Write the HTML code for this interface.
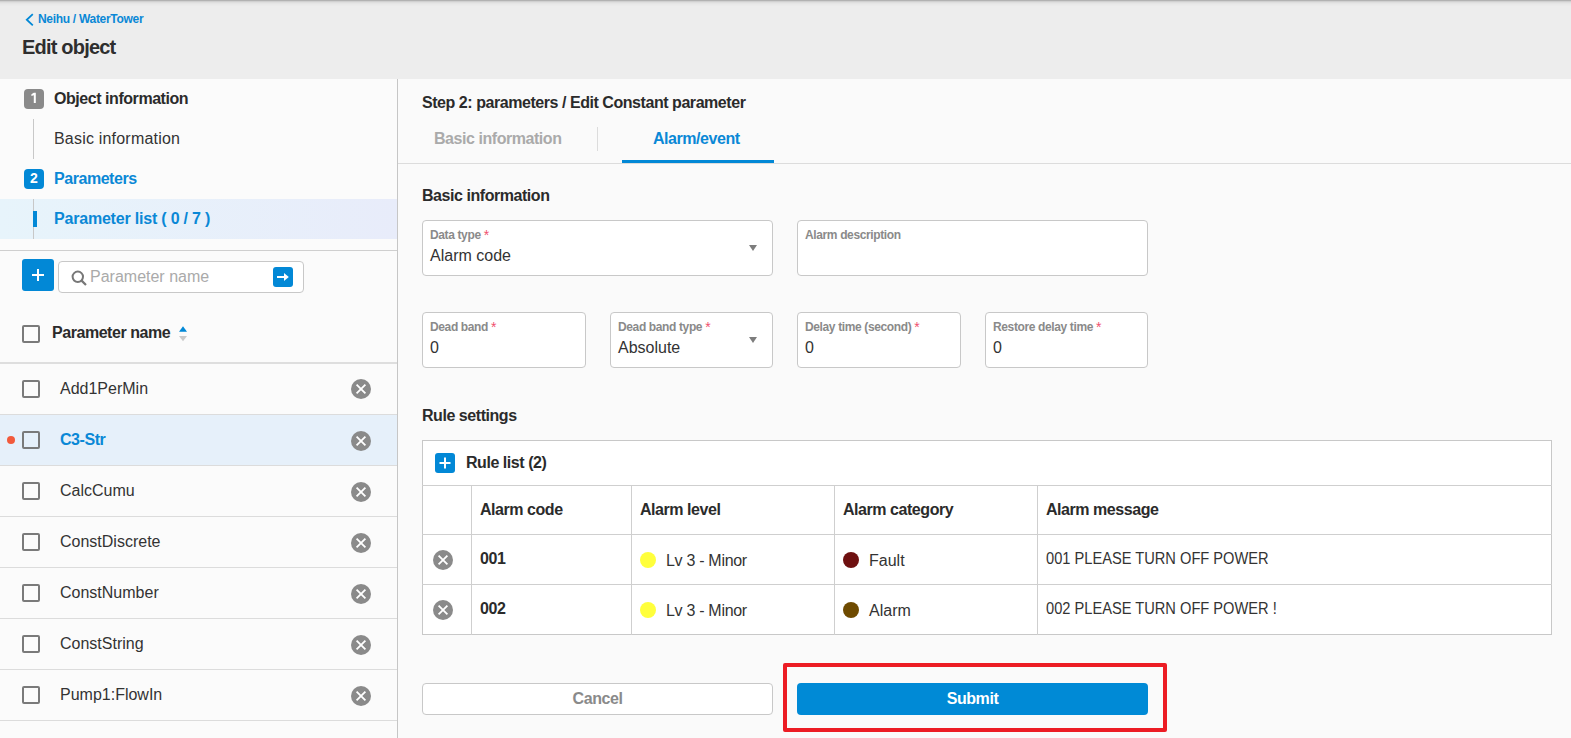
<!DOCTYPE html>
<html><head><meta charset="utf-8">
<style>
*{box-sizing:border-box;margin:0;padding:0}
html,body{width:1571px;height:738px;overflow:hidden;background:#fafafa;font-family:"Liberation Sans",sans-serif;color:#333}
.a{position:absolute}
.t{position:absolute;white-space:nowrap;font-size:16px;line-height:20px}
.b{font-weight:bold;letter-spacing:-0.45px}
#hdr{left:0;top:0;width:1571px;height:79px;background:#ededed}
#shadow{left:0;top:0;width:1571px;height:7px;background:linear-gradient(#b2b2b2 0px,#b2b2b2 0.5px,#d0d0d0 1.5px,#dedede 2.5px,#e5e5e5 3.5px,#e9e9e9 4.5px,#ededed 6.5px)}
#side{left:0;top:79px;width:398px;height:659px;background:#fbfbfb;border-right:1px solid #c6c6c6}
.badge{position:absolute;width:20px;height:20px;border-radius:4px;color:#fff;font-weight:bold;font-size:14px;line-height:20px;text-align:center}
.cb{position:absolute;width:18px;height:18px;border:2px solid #7a7a7a;border-radius:2px;background:transparent}
.xc{position:absolute;width:20px;height:20px;border-radius:50%;background:#8a8a8a}
.xc svg{position:absolute;left:0;top:0}
.hl{position:absolute;height:1px;background:#dcdcdc}
.vl{position:absolute;width:1px;background:#cfcfcf}
.fld{position:absolute;height:56px;border:1px solid #c8c8c8;border-radius:4px;background:#fff}
.lbl{position:absolute;left:7px;top:7.2px;font-size:12px;line-height:14px;font-weight:bold;color:#8a8a8a;letter-spacing:-0.37px;white-space:nowrap}
.lbl i{font-style:normal;font-weight:normal;font-size:14px;line-height:1px;color:#f0506e;margin-left:3px;position:relative;top:0.4px}
.val{position:absolute;left:7px;top:25.2px;font-size:16px;line-height:20px;color:#333;white-space:nowrap}
.dd{position:absolute;width:0;height:0;border-left:4px solid transparent;border-right:4px solid transparent;border-top:6px solid #7d7d7d}
.dot{position:absolute;width:16px;height:16px;border-radius:50%}
</style></head>
<body>
<div id="hdr" class="a"></div>
<div id="shadow" class="a"></div>
<svg class="a" style="left:20px;top:8px" width="20" height="24"><path d="M12.8 6.2L6.8 11.75L12.8 17.3" fill="none" stroke="#0288d6" stroke-width="1.8"/></svg>
<div class="t" style="left:38px;top:11.8px;font-size:12px;line-height:14px;font-weight:bold;color:#0a88d6;letter-spacing:-0.3px">Neihu / WaterTower</div>
<div class="t" style="left:22px;top:35px;font-size:20px;line-height:24px;font-weight:bold;color:#2e2e2e;letter-spacing:-0.8px">Edit object</div>

<div id="side" class="a"></div>
<div class="badge" style="left:24px;top:89px;background:#8a8a8a"><svg width="20" height="20" style="position:absolute;left:0;top:0"><polygon points="9.8,3.7 11.8,3.7 11.8,13.9 9.8,13.9 9.8,6.2 7.4,7.0 7.4,5.3" fill="#fff"/></svg></div>
<div class="t b" style="left:54px;top:88.5px;color:#2b2b2b">Object information</div>
<div class="vl" style="left:33px;top:119px;height:40px;background:#c8c8c8"></div>
<div class="t" style="left:54px;top:129px;color:#333;letter-spacing:0.2px">Basic information</div>
<div class="badge" style="left:24px;top:169px;background:#0288d6;line-height:18px">2</div>
<div class="t b" style="left:54px;top:168.5px;color:#0a88d6">Parameters</div>
<div class="a" style="left:0;top:199px;width:397px;height:40px;background:linear-gradient(90deg,#e7f4fb,#e8ecfa)"></div>
<div class="vl" style="left:33px;top:199px;height:40px;background:#c8c8c8"></div>
<div class="a" style="left:33px;top:211px;width:4px;height:16px;background:#0288d6"></div>
<div class="t b" style="left:54px;top:208.5px;color:#0a88d6;letter-spacing:-0.2px">Parameter list ( 0 / 7 )</div>
<div class="hl" style="left:0;top:250px;width:397px;background:#cfcfcf"></div>

<div class="a" style="left:22px;top:259px;width:32px;height:32px;border-radius:3px;background:#0288d6"></div>
<svg class="a" style="left:22px;top:259px" width="32" height="32"><path d="M16 10V22M10 16H22" stroke="#fff" stroke-width="2"/></svg>
<div class="a" style="left:58px;top:261px;width:246px;height:32px;border:1px solid #c8c8c8;border-radius:4px;background:#fff"></div>
<svg class="a" style="left:71px;top:269.5px" width="17" height="17"><circle cx="6.8" cy="6.8" r="5.2" fill="none" stroke="#777" stroke-width="2"/><path d="M10.6 10.6L15 15" stroke="#777" stroke-width="2.2"/></svg>
<div class="t" style="left:90px;top:266.8px;color:#aaa">Parameter name</div>
<div class="a" style="left:273px;top:267px;width:20px;height:20px;border-radius:3px;background:#0288d6"></div>
<svg class="a" style="left:273px;top:267px" width="20" height="20"><path d="M4 9H11.5V11H4Z" fill="#fff"/><path d="M11 6L15.8 10L11 14Z" fill="#fff"/></svg>

<div class="cb" style="left:22px;top:325px"></div>
<div class="t b" style="left:52px;top:322.5px;color:#2b2b2b">Parameter name</div>
<svg class="a" style="left:178px;top:325px" width="10" height="18"><path d="M1 6.8L5 1.2L9 6.8Z" fill="#0288d6"/><path d="M1 11L5 16.2L9 11Z" fill="#c9c9c9"/></svg>
<div class="a" style="left:0;top:362px;width:397px;height:2px;background:#dedede"></div>

<!-- rows -->
<div class="a" style="left:0;top:415px;width:397px;height:50px;background:#e6f0fa"></div>
<div class="hl" style="left:0;top:414px;width:397px"></div>
<div class="hl" style="left:0;top:465px;width:397px"></div>
<div class="hl" style="left:0;top:516px;width:397px"></div>
<div class="hl" style="left:0;top:567px;width:397px"></div>
<div class="hl" style="left:0;top:618px;width:397px"></div>
<div class="hl" style="left:0;top:669px;width:397px"></div>
<div class="hl" style="left:0;top:720px;width:397px"></div>

<div class="cb" style="left:22px;top:380px"></div>
<div class="t" style="left:60px;top:378.5px">Add1PerMin</div>
<div class="a" style="left:7px;top:436px;width:8px;height:8px;border-radius:50%;background:#f25a3c"></div>
<div class="cb" style="left:22px;top:431px"></div>
<div class="t b" style="left:60px;top:429.5px;color:#0a88d6">C3-Str</div>
<div class="cb" style="left:22px;top:482px"></div>
<div class="t" style="left:60px;top:480.5px">CalcCumu</div>
<div class="cb" style="left:22px;top:533px"></div>
<div class="t" style="left:60px;top:531.5px">ConstDiscrete</div>
<div class="cb" style="left:22px;top:584px"></div>
<div class="t" style="left:60px;top:582.5px">ConstNumber</div>
<div class="cb" style="left:22px;top:635px"></div>
<div class="t" style="left:60px;top:633.5px">ConstString</div>
<div class="cb" style="left:22px;top:686px"></div>
<div class="t" style="left:60px;top:684.5px">Pump1:FlowIn</div>

<div class="xc" style="left:351px;top:379px"><svg width="20" height="20"><path d="M5.6 5.6L14.4 14.4M14.4 5.6L5.6 14.4" stroke="#fff" stroke-width="1.8"/></svg></div>
<div class="xc" style="left:351px;top:431px"><svg width="20" height="20"><path d="M5.6 5.6L14.4 14.4M14.4 5.6L5.6 14.4" stroke="#fff" stroke-width="1.8"/></svg></div>
<div class="xc" style="left:351px;top:482px"><svg width="20" height="20"><path d="M5.6 5.6L14.4 14.4M14.4 5.6L5.6 14.4" stroke="#fff" stroke-width="1.8"/></svg></div>
<div class="xc" style="left:351px;top:533px"><svg width="20" height="20"><path d="M5.6 5.6L14.4 14.4M14.4 5.6L5.6 14.4" stroke="#fff" stroke-width="1.8"/></svg></div>
<div class="xc" style="left:351px;top:584px"><svg width="20" height="20"><path d="M5.6 5.6L14.4 14.4M14.4 5.6L5.6 14.4" stroke="#fff" stroke-width="1.8"/></svg></div>
<div class="xc" style="left:351px;top:635px"><svg width="20" height="20"><path d="M5.6 5.6L14.4 14.4M14.4 5.6L5.6 14.4" stroke="#fff" stroke-width="1.8"/></svg></div>
<div class="xc" style="left:351px;top:686px"><svg width="20" height="20"><path d="M5.6 5.6L14.4 14.4M14.4 5.6L5.6 14.4" stroke="#fff" stroke-width="1.8"/></svg></div>

<!-- main -->
<div class="t b" style="left:422px;top:93.3px;color:#2b2b2b">Step 2: parameters / Edit Constant parameter</div>
<div class="t b" style="left:434px;top:129px;color:#aaa">Basic information</div>
<div class="vl" style="left:597px;top:127px;height:24px;background:#dcdcdc"></div>
<div class="t b" style="left:653px;top:129px;color:#0a88d6">Alarm/event</div>
<div class="hl" style="left:398px;top:163px;width:1173px"></div>
<div class="a" style="left:622px;top:160px;width:152px;height:3px;background:#0288d6"></div>

<div class="t b" style="left:422px;top:186.3px;color:#2b2b2b">Basic information</div>

<div class="fld" style="left:422px;top:220px;width:351px"><div class="lbl">Data type<i>*</i></div><div class="val">Alarm code</div><div class="dd" style="left:326px;top:24px"></div></div>
<div class="fld" style="left:797px;top:220px;width:351px"><div class="lbl">Alarm description</div></div>

<div class="fld" style="left:422px;top:312px;width:164px"><div class="lbl">Dead band<i>*</i></div><div class="val">0</div></div>
<div class="fld" style="left:610px;top:312px;width:163px"><div class="lbl">Dead band type<i>*</i></div><div class="val">Absolute</div><div class="dd" style="left:138px;top:24px"></div></div>
<div class="fld" style="left:797px;top:312px;width:164px"><div class="lbl">Delay time (second)<i>*</i></div><div class="val">0</div></div>
<div class="fld" style="left:985px;top:312px;width:163px"><div class="lbl">Restore delay time<i>*</i></div><div class="val">0</div></div>

<div class="t b" style="left:422px;top:405.8px;color:#2b2b2b">Rule settings</div>

<div class="a" style="left:422px;top:440px;width:1130px;height:195px;border:1px solid #c8c8c8;background:#fff"></div>
<div class="a" style="left:435px;top:453px;width:20px;height:20px;border-radius:3px;background:#0288d6"></div>
<svg class="a" style="left:435px;top:453px" width="20" height="20"><path d="M10 4.5V15.5M4.5 10H15.5" stroke="#fff" stroke-width="2"/></svg>
<div class="t b" style="left:466px;top:452.8px;color:#2b2b2b">Rule list (2)</div>
<div class="hl" style="left:422px;top:485px;width:1130px;background:#cfcfcf"></div>
<div class="hl" style="left:422px;top:534px;width:1130px;background:#cfcfcf"></div>
<div class="hl" style="left:422px;top:584px;width:1130px;background:#cfcfcf"></div>
<div class="vl" style="left:471px;top:485px;height:150px"></div>
<div class="vl" style="left:631px;top:485px;height:150px"></div>
<div class="vl" style="left:834px;top:485px;height:150px"></div>
<div class="vl" style="left:1037px;top:485px;height:150px"></div>

<div class="t b" style="left:480px;top:499.5px;color:#2b2b2b">Alarm code</div>
<div class="t b" style="left:640px;top:499.5px;color:#2b2b2b">Alarm level</div>
<div class="t b" style="left:843px;top:499.5px;color:#2b2b2b">Alarm category</div>
<div class="t b" style="left:1046px;top:499.5px;color:#2b2b2b">Alarm message</div>

<div class="xc" style="left:433px;top:550px"><svg width="20" height="20"><path d="M5.6 5.6L14.4 14.4M14.4 5.6L5.6 14.4" stroke="#fff" stroke-width="1.8"/></svg></div>
<div class="t b" style="left:480px;top:548.7px;color:#2b2b2b">001</div>
<div class="dot" style="left:640px;top:552px;background:#ffff3c"></div>
<div class="t" style="left:666px;top:551px;letter-spacing:-0.3px">Lv 3 - Minor</div>
<div class="dot" style="left:843px;top:552px;background:#6e1010"></div>
<div class="t" style="left:869px;top:551px">Fault</div>
<div class="t" style="left:1046px;top:548.8px;transform:scaleX(0.915);transform-origin:0 0">001 PLEASE TURN OFF POWER</div>

<div class="xc" style="left:433px;top:600px"><svg width="20" height="20"><path d="M5.6 5.6L14.4 14.4M14.4 5.6L5.6 14.4" stroke="#fff" stroke-width="1.8"/></svg></div>
<div class="t b" style="left:480px;top:598.7px;color:#2b2b2b">002</div>
<div class="dot" style="left:640px;top:602px;background:#ffff3c"></div>
<div class="t" style="left:666px;top:601px;letter-spacing:-0.3px">Lv 3 - Minor</div>
<div class="dot" style="left:843px;top:602px;background:#6e4a00"></div>
<div class="t" style="left:869px;top:601px">Alarm</div>
<div class="t" style="left:1046px;top:598.8px;transform:scaleX(0.915);transform-origin:0 0">002 PLEASE TURN OFF POWER !</div>

<div class="a" style="left:422px;top:683px;width:351px;height:32px;border:1px solid #c8c8c8;border-radius:4px;background:#fff"></div>
<div class="t b" style="left:422px;top:688.5px;width:351px;text-align:center;color:#8a8a8a">Cancel</div>
<div class="a" style="left:797px;top:683px;width:351px;height:32px;border-radius:4px;background:#008ad6"></div>
<div class="t b" style="left:797px;top:688.5px;width:351px;text-align:center;color:#fff">Submit</div>
<div class="a" style="left:783px;top:663px;width:384px;height:69px;border:4px solid #ec1c24;border-radius:2px"></div>
</body></html>
